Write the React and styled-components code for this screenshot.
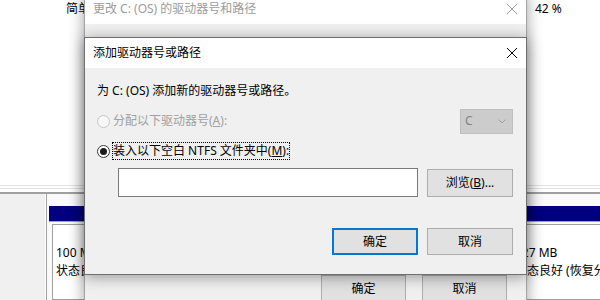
import React from 'react'
import styled, { createGlobalStyle } from 'styled-components'

const GlobalStyle = createGlobalStyle`
  html, body {
    margin: 0;
    padding: 0;
    background: #fff;
  }
  body {
    width: 600px;
    height: 300px;
    overflow: hidden;
    font-family: "Noto Sans", "Noto Sans CJK SC", sans-serif;
    font-size: 12px;
    color: #000;
  }
`

const Screen = styled.div`
  position: relative;
  width: 600px;
  height: 300px;
  overflow: hidden;
`

/* disk management window behind the dialogs */
const Manager = styled.div`
  width: 600px;
  height: 300px;
  display: flex;
  flex-direction: column;
  background: #fff;
`

const VolumeList = styled.div`
  height: 185px;
  flex: none;
`

const VolumeRow = styled.div`
  display: grid;
  grid-template-columns: 469px auto;
  padding-left: 66px;
  height: 18px;
  line-height: 18px;
  white-space: nowrap;
`

const Splitter = styled.div`
  height: 9px;
  flex: none;
  background: linear-gradient(
    #e3e3e3 0 1px, #fff 1px 3px, #e3e3e3 3px 4px, #fff 4px 7px, #a0a0a0 7px 9px
  );
`

const DiskPanel = styled.div`
  flex: 1;
  display: flex;
  min-height: 0;
`

const DiskLabel = styled.div`
  width: 45px;
  flex: none;
  background: #f0f0f0;
  border-right: 1px solid #fff;
`

const Partitions = styled.div`
  flex: 1;
  min-width: 0;
  display: flex;
  gap: 2px;
  padding-left: 1px;
  border-left: 1px solid #a0a0a0;
  background: #fafafa;
`

const Partition = styled.div`
  display: flex;
  flex-direction: column;
  width: ${p => (p.$width ? `${p.$width}px` : 'auto')};
  flex: ${p => (p.$width ? 'none' : '1')};
  min-width: 0;
  overflow: hidden;
`

const PartHeader = styled.div`
  height: 15px;
  margin: 12px 0 0 1px;
  background: #000080;
  border-bottom: 1px solid #a0a0a0;
`

const PartBody = styled.div`
  flex: 1;
  margin: 2px 0 0 4px;
  padding: 19px 0 0 3px;
  border: 1px solid #a0a0a0;
  border-right: none;
  background: #fff;
  line-height: 18px;
  white-space: nowrap;
`

/* dialog windows */
const Dialog = styled.div`
  position: absolute;
  left: 84px;
  top: ${p => p.$top}px;
  width: 443px;
  height: ${p => p.$height}px;
  box-sizing: border-box;
  border: 1px solid ${p => (p.$active ? '#6f6f6f' : '#a3a3a3')};
  background: #f0f0f0;
  box-shadow: 0 2px 14px rgba(0, 0, 0, 0.38);
  display: flex;
  flex-direction: column;
`

const TitleBar = styled.div`
  height: 30px;
  flex: none;
  display: flex;
  align-items: center;
  padding-left: 8px;
  background: #fff;
  color: ${p => (p.$active ? '#000' : '#9c9c9c')};
  line-height: 16px;
`

const TitleText = styled.span`
  flex: 1;
  white-space: nowrap;
`

const CloseButton = styled.span`
  width: 28px;
  height: 30px;
  display: flex;
  align-items: center;
  justify-content: center;
`

const CloseGlyph = ({ color }) => (
  <svg width="10" height="10" viewBox="0 0 10 10">
    <path d="M0 0L10 10M10 0L0 10" stroke={color} strokeWidth="1" fill="none" />
  </svg>
)

const MiddleBody = styled.div`
  flex: 1;
  display: flex;
  flex-direction: column;
  padding: 0 19px 0 12px;
`

const MountList = styled.div`
  height: 251px;
`

const ButtonRow = styled.div`
  display: flex;
  justify-content: flex-end;
  gap: ${p => p.$gap}px;
  margin-top: ${p => p.$mt || 0}px;
`

const Button = styled.button`
  box-sizing: border-box;
  width: ${p => p.$w}px;
  height: ${p => p.$h || 27}px;
  flex: none;
  padding: 0;
  background: #e1e1e1;
  border: ${p => (p.$default ? '2px solid #0078d7' : '1px solid #adadad')};
  font: inherit;
  color: #000;
  line-height: 16px;
`

const AddBody = styled.div`
  flex: 1;
  display: flex;
  flex-direction: column;
  padding: 15px 13px 0 12px;
`

const Prompt = styled.div`
  line-height: 16px;
  white-space: nowrap;
`

const OptionRow = styled.div`
  display: flex;
  align-items: center;
  height: ${p => p.$h}px;
  margin-top: ${p => p.$mt}px;
`

const Radio = styled.span`
  width: 13px;
  height: 13px;
  box-sizing: border-box;
  flex: none;
  border-radius: 50%;
  border: 1px solid ${p => (p.$disabled ? '#c6c6c6' : '#333')};
  background: ${p => (p.$disabled ? '#f7f7f7' : '#fff')};
  display: flex;
  align-items: center;
  justify-content: center;
  margin-top: 1px;

  &::after {
    content: '';
    width: 7px;
    height: 7px;
    border-radius: 50%;
    background: ${p => (p.$checked ? '#1b1b1b' : 'transparent')};
  }
`

const OptionLabel = styled.span`
  margin-left: 2px;
  border: 1px dotted ${p => (p.$focused ? '#000' : 'transparent')};
  line-height: 16px;
  color: ${p => (p.$disabled ? '#a0a0a0' : '#000')};
  white-space: nowrap;
`

const Combo = styled.div`
  margin-left: auto;
  width: 53px;
  height: 25px;
  box-sizing: border-box;
  display: flex;
  align-items: center;
  justify-content: space-between;
  padding: 0 6px 0 4px;
  background: #cccccc;
  border: 1px solid #bfbfbf;
  color: #838383;
  line-height: 16px;
`

const Chevron = () => (
  <svg width="8" height="5" viewBox="0 0 8 5">
    <path d="M0.5 0.5L4 4L7.5 0.5" stroke="#a2a2a2" strokeWidth="1" fill="none" />
  </svg>
)

const PathRow = styled.div`
  display: flex;
  align-items: flex-end;
  justify-content: space-between;
  margin-top: 8px;
  height: 29px;
`

const PathInput = styled.div`
  width: 300px;
  height: 29px;
  box-sizing: border-box;
  margin-left: 21px;
  background: #fff;
  border: 1px solid #7a7a7a;
`

export default function App() {
  return (
    <Screen>
      <GlobalStyle />
      <Manager>
        <VolumeList>
          <VolumeRow>
            <span>简单</span>
            <span>42 %</span>
          </VolumeRow>
        </VolumeList>
        <Splitter />
        <DiskPanel>
          <DiskLabel />
          <Partitions>
            <Partition $width={120}>
              <PartHeader />
              <PartBody>
                100 MB
                <br />
                状态良好 (EFI 系统分区)
              </PartBody>
            </Partition>
            <Partition $width={335}>
              <PartHeader />
              <PartBody>
                OS (C:)
                <br />
                237.36 GB NTFS
              </PartBody>
            </Partition>
            <Partition>
              <PartHeader />
              <PartBody>
                527 MB
                <br />
                状态良好 (恢复分区)
              </PartBody>
            </Partition>
          </Partitions>
        </DiskPanel>
      </Manager>

      <Dialog $top={-7} $height={320}>
        <TitleBar>
          <TitleText>更改 C: (OS) 的驱动器号和路径</TitleText>
          <CloseButton>
            <CloseGlyph color="#a0a0a0" />
          </CloseButton>
        </TitleBar>
        <MiddleBody>
          <MountList />
          <ButtonRow $gap={16}>
            <Button $w={85}>确定</Button>
            <Button $w={85}>取消</Button>
          </ButtonRow>
        </MiddleBody>
      </Dialog>

      <Dialog $top={37} $height={238} $active>
        <TitleBar $active>
          <TitleText>添加驱动器号或路径</TitleText>
          <CloseButton>
            <CloseGlyph color="#000" />
          </CloseButton>
        </TitleBar>
        <AddBody>
          <Prompt>为 C: (OS) 添加新的驱动器号或路径。</Prompt>
          <OptionRow $h={26} $mt={9}>
            <Radio $disabled />
            <OptionLabel $disabled>
              分配以下驱动器号(<u>A</u>):
            </OptionLabel>
            <Combo>
              <span>C</span>
              <Chevron />
            </Combo>
          </OptionRow>
          <OptionRow $h={18} $mt={8}>
            <Radio $checked />
            <OptionLabel $focused>
              装入以下空白 NTFS 文件夹中(<u>M</u>):
            </OptionLabel>
          </OptionRow>
          <PathRow>
            <PathInput />
            <Button $w={86} $h={28}>
              浏览(<u>B</u>)...
            </Button>
          </PathRow>
          <ButtonRow $gap={9} $mt={31}>
            <Button $w={86} $default>
              确定
            </Button>
            <Button $w={86}>取消</Button>
          </ButtonRow>
        </AddBody>
      </Dialog>
    </Screen>
  )
}
